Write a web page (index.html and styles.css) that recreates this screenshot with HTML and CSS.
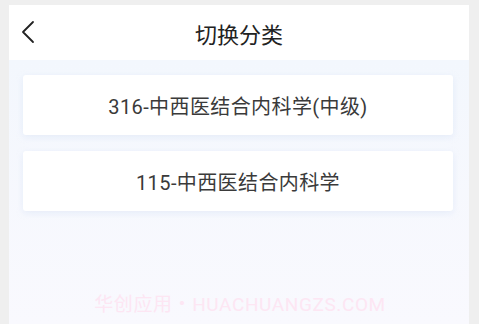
FILE: index.html
```html
<!DOCTYPE html>
<html lang="zh">
<head>
<meta charset="utf-8">
<link rel="stylesheet" href="styles.css">
</head>
<body>
<div class="app">
  <header class="header">
    <span class="back">
      <svg width="14" height="24" viewBox="0 0 14 24"><path d="M12 2 L2 12 L12 22" fill="none" stroke="#222" stroke-width="1.8" stroke-linecap="round" stroke-linejoin="round"/></svg>
    </span>
    <h1 class="title">切换分类</h1>
  </header>
  <main class="content">
    <div class="card">316-中西医结合内科学(中级)</div>
    <div class="card">115-中西医结合内科学</div>
    <div class="watermark">华创应用・HUACHUANGZS.COM</div>
  </main>
</div>
</body>
</html>
```
FILE: styles.css
```css
html, body {
  margin: 0;
  padding: 0;
  height: 100%;
  background: #efefef;
  font-family: Roboto, "Noto Sans CJK SC", sans-serif;
  overflow: hidden;
}
.app {
  margin: 5px 10px 0 9px;
  height: 319px;
  display: flex;
  flex-direction: column;
  background: #f4f7fd;
}
.header {
  height: 55px;
  flex: none;
  background: #fff;
  display: flex;
  align-items: center;
  justify-content: center;
  position: relative;
}
.back {
  position: absolute;
  left: 12px;
  top: 15px;
  display: flex;
}
.title {
  margin: 0;
  font-size: 22px;
  font-weight: 400;
  color: #222;
  letter-spacing: 0;
}
.content {
  flex: 1;
  display: flex;
  flex-direction: column;
  gap: 16px;
  padding: 15px 16px 0 14px;
  background: linear-gradient(#f3f7fd, #f9f9fe);
}
.card {
  height: 60px;
  background: #fff;
  border-radius: 3px;
  box-shadow: 0 2px 6px rgba(200, 215, 240, 0.35);
  display: flex;
  align-items: center;
  justify-content: center;
  font-size: 20px;
  color: #3a3a3a;
  letter-spacing: 0.4px;
}
.watermark {
  margin-top: 62px;
  text-align: center;
  font-size: 19px;
  color: #fde6f3;
  letter-spacing: 0.6px;
  padding-left: 4px;
}
```
